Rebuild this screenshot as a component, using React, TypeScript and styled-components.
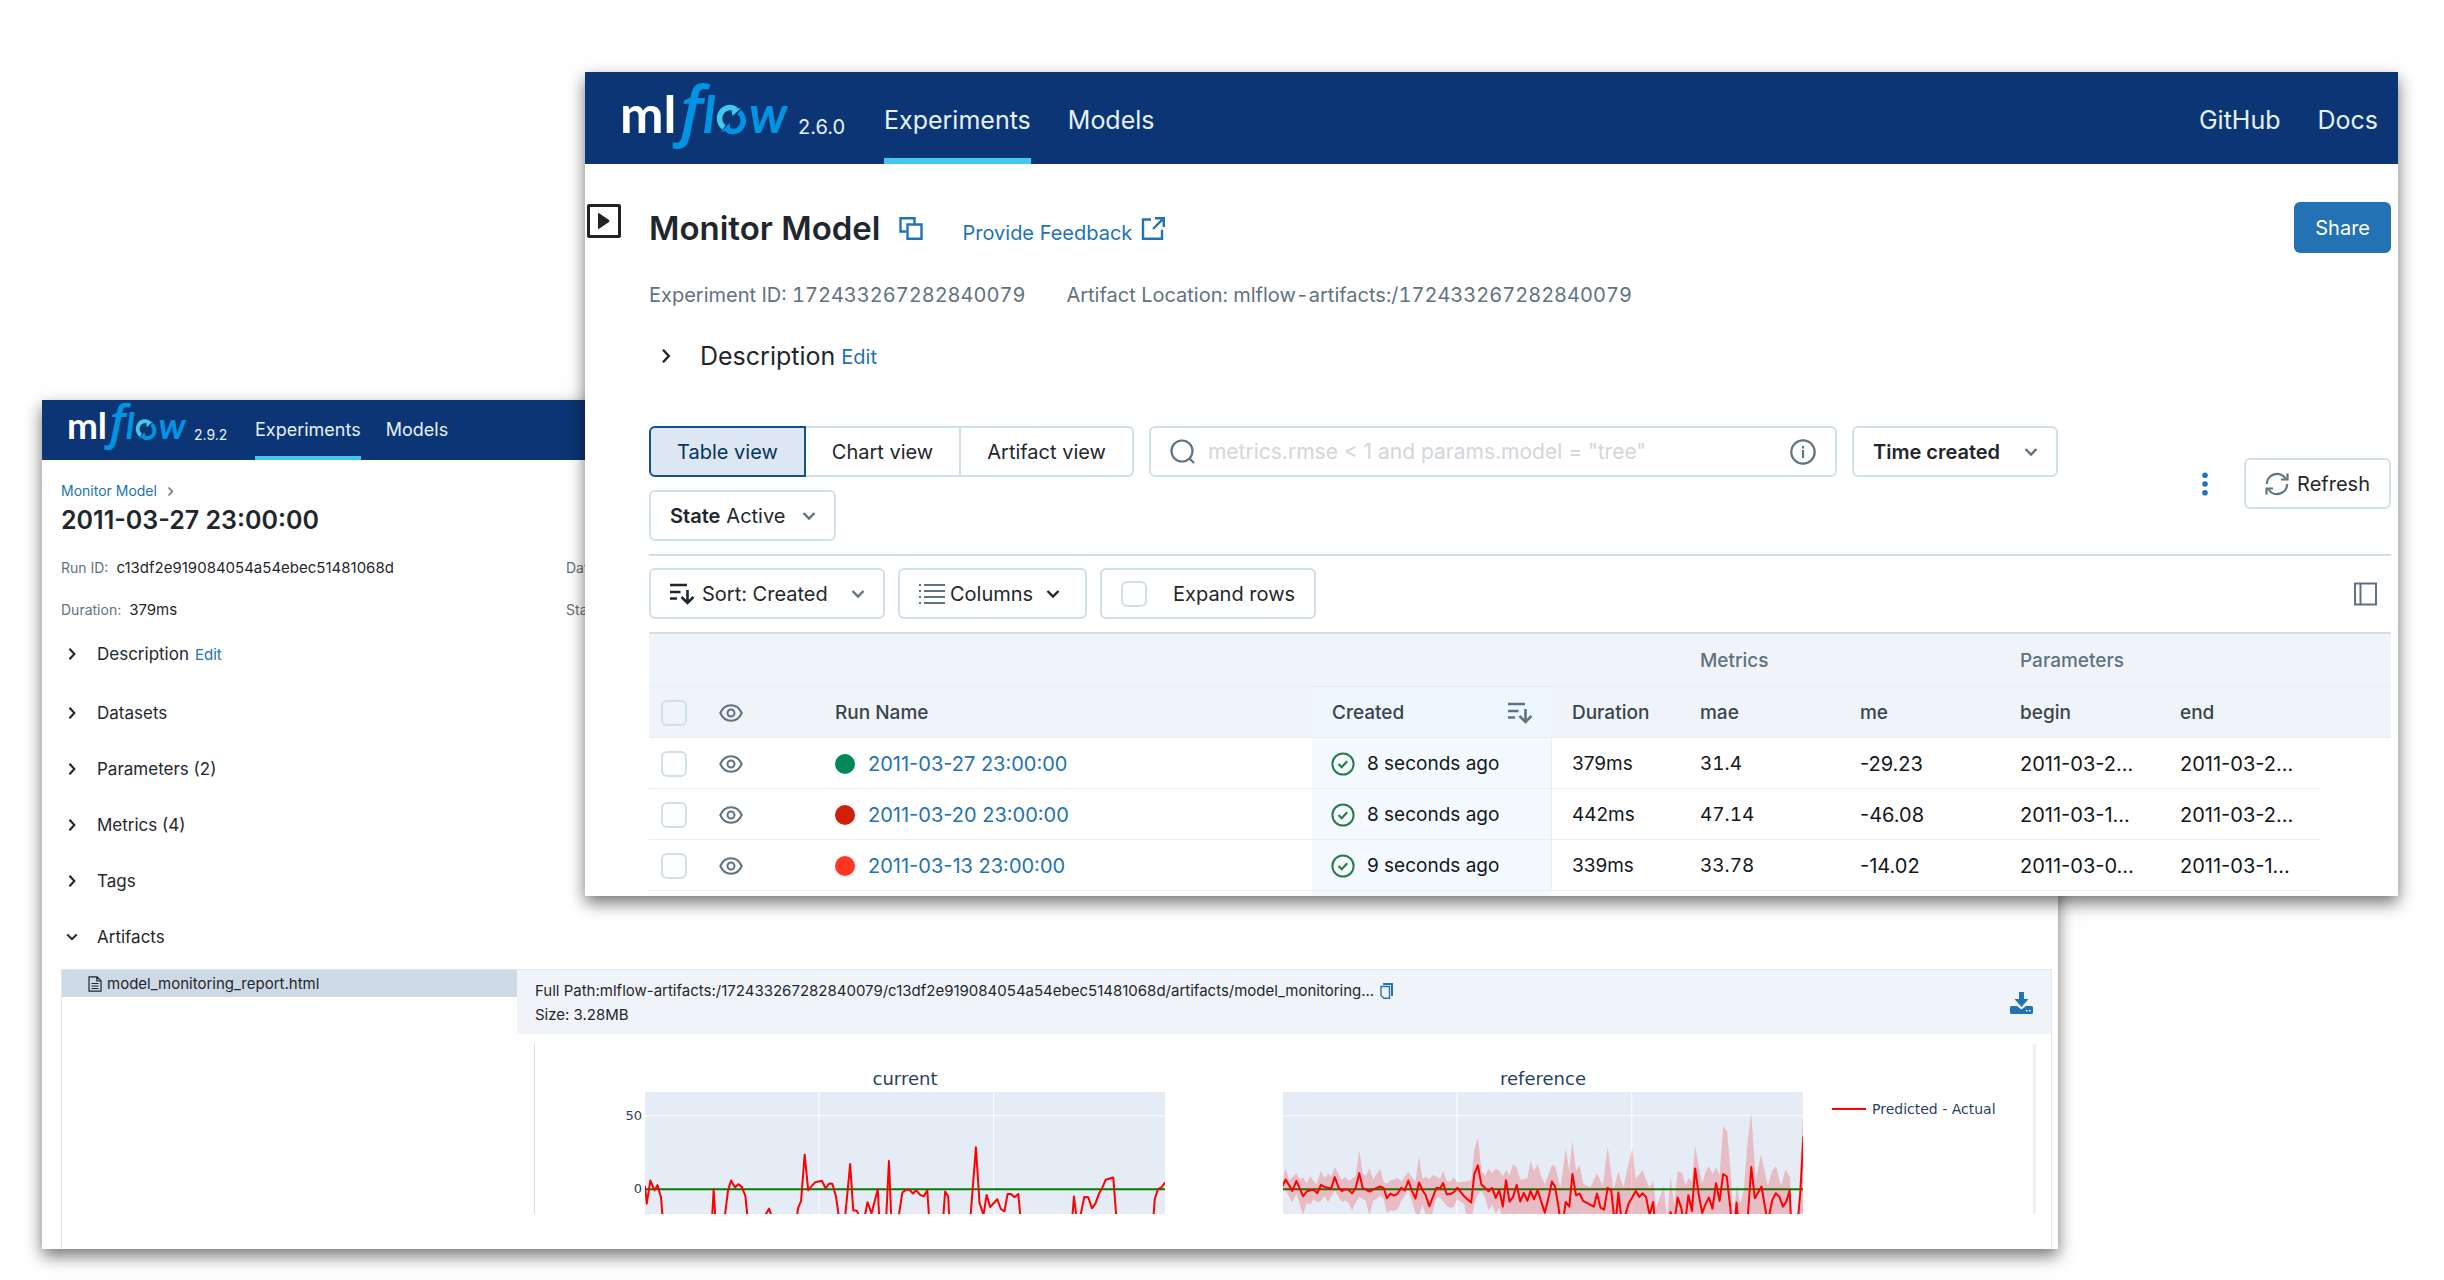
import React from "react";
import styled, { createGlobalStyle, css } from "styled-components";

const color = {
  navy: "#0b3574",
  navText: "#e7f1fb",
  accent: "#43c9ed",
  link: "#2272b4",
  text: "#1f272d",
  muted: "#5f7281",
  border: "#d1dfe9",
  line: "#e6eef4",
  head: "#f0f4f8",
};

const GlobalStyle = createGlobalStyle`
  *, *::before, *::after { box-sizing: border-box; }
  body { margin: 0; background: #fff; color: ${color.text}; font-family: Inter, "Liberation Sans", sans-serif; }
  button, input, select { font: inherit; color: inherit; margin: 0; }
  a { color: ${color.link}; text-decoration: none; }
  svg { display: block; flex: none; }
  h1, h2, p, dl, dd { margin: 0; }
`;

const Desktop = styled.main`
  position: relative;
  min-width: 2100px;
  min-height: 100vh;
  overflow: hidden;
`;

const windowFrame = css`
  position: absolute;
  background: #fff;
  box-shadow: 0 7px 16px rgba(0, 0, 0, 0.55);
`;

const ExperimentWindow = styled.section`
  ${windowFrame}
  top: 72px;
  left: 585px;
  right: 46px;
  font-size: 20px;
  line-height: 24px;
`;

const RunWindow = styled.section`
  ${windowFrame}
  top: 400px;
  left: 42px;
  right: 386px;
  font-size: 14px;
  line-height: 24px;
`;

/* Top navigation */

const TopBar = styled.header<{ $compact?: boolean }>`
  display: flex;
  height: ${(p) => (p.$compact ? 60 : 92)}px;
  padding: ${(p) => (p.$compact ? "0 20px 0 27px" : "0 20px 0 38px")};
  background: ${color.navy};
  color: ${color.navText};
  font-size: ${(p) => (p.$compact ? 18 : 25)}px;
`;

const Brand = styled.div<{ $compact?: boolean }>`
  display: flex;
  align-items: flex-end;
  align-self: flex-start;
  gap: ${(p) => (p.$compact ? 7 : 9)}px;
  width: ${(p) => (p.$compact ? 186 : 261)}px;
  padding-top: ${(p) => (p.$compact ? 3 : 10)}px;
`;

const Version = styled.span<{ $compact?: boolean }>`
  font-size: ${(p) => (p.$compact ? 14 : 20)}px;
  line-height: ${(p) => (p.$compact ? 14 : 20)}px;
  padding-bottom: ${(p) => (p.$compact ? 8 : 11)}px;
`;

const Nav = styled.nav<{ $compact?: boolean; $end?: boolean }>`
  display: flex;
  gap: ${(p) => (p.$compact ? 25 : 37)}px;
  margin-left: ${(p) => (p.$end ? "auto" : 0)};
`;

const NavLink = styled.a<{ $active?: boolean; $compact?: boolean }>`
  display: flex;
  align-items: center;
  color: inherit;
  padding-top: ${(p) => (p.$compact ? 4 : 10)}px;
  border-bottom: ${(p) => (p.$compact ? 4 : 6)}px solid ${(p) => (p.$active ? color.accent : "transparent")};
`;

const logoFont = 'Lato, "Open Sans", sans-serif';

const Logo = ({ width }: { width: number }) => (
  <svg width={width} height={(width * 66) / 166} viewBox="0 0 166 66" overflow="visible" role="img" aria-label="mlflow">
    <text x="-3" y="51" fontFamily={logoFont} fontWeight="700" fontSize="52" fill="#fff">ml</text>
    <text x="57" y="51" fontFamily='"Open Sans", sans-serif' fontStyle="italic" fontWeight="600" fontSize="66" fill="#0194e2">f</text>
    <text x="80" y="51" fontFamily={logoFont} fontStyle="italic" fontWeight="700" fontSize="52" fill="#0194e2">l</text>
    <g fill="none" strokeWidth="5.500">
      <path d="M101 45.500A10 10.500 0 0 1 113 27.500" stroke="#43c9ed" />
      <path d="M116 30A10 10.500 0 0 1 104 47.500" stroke="#0194e2" />
    </g>
    <path d="M118 26L109.500 34L108.500 27z" fill="#43c9ed" />
    <path d="M98 50L106.500 41L107.500 48z" fill="#0194e2" />
    <text x="126" y="51" fontFamily={logoFont} fontStyle="italic" fontWeight="700" fontSize="52" fill="#0194e2">w</text>
  </svg>
);

/* Icons */

type IconProps = { size?: number; width?: number };

const Chevron = ({ size = 14, dir = "down", width = 2.4 }: IconProps & { dir?: "down" | "right" }) => (
  <svg width={size} height={size} viewBox="0 0 14 14" fill="none" stroke="currentColor" strokeWidth={width}>
    <path d={dir === "down" ? "M1.500 4l5.500 5.500L12.500 4" : "M4 .8L9.800 7 4 13.200"} />
  </svg>
);

const CopyIcon = () => (
  <svg width="24" height="23" viewBox="0 0 24 23" fill="none" stroke="currentColor" strokeWidth="2.400">
    <path d="M7.500 14.500H1.500V1.200h14v5.500" />
    <path d="M8.500 7.500h14V21.800h-14z" />
  </svg>
);

const ExternalIcon = () => (
  <svg width="24" height="23" viewBox="0 0 24 23" fill="none" stroke="currentColor" strokeWidth="2.400">
    <path d="M10 2.500H2v19.300h19v-9M14 1.300h8.800v8.700M22.300 1.700L12 12" />
  </svg>
);

const SearchIcon = () => (
  <svg width="25" height="25" viewBox="0 0 25 25" fill="none" stroke={color.muted} strokeWidth="2.2">
    <circle cx="12" cy="12" r="10.500" />
    <path d="M19 19l5 5" />
  </svg>
);

const InfoIcon = () => (
  <svg width="26" height="26" viewBox="0 0 26 26" fill="none" stroke={color.muted} strokeWidth="2.200">
    <circle cx="13" cy="13" r="11.700" />
    <path d="M13 11v8M13 7v2.400" />
  </svg>
);

const SortIcon = () => (
  <svg width="24" height="22" viewBox="0 0 24 22" fill="none" stroke="currentColor" strokeWidth="2.600">
    <path d="M0 2h17M0 9h10.500M0 15.500h7M17.500 7v13M11.500 14l6 6 6-6" />
  </svg>
);

const ListIcon = () => (
  <svg width="26" height="22" viewBox="0 0 26 22" fill="none" stroke={color.muted} strokeWidth="2">
    <path d="M5 2h21M5 8h21M5 14h21M5 20h21M0 2h2M0 8h2M0 14h2M0 20h2" />
  </svg>
);

const RefreshIcon = () => (
  <svg width="24" height="24" viewBox="0 0 24 24" fill="none" stroke={color.muted} strokeWidth="2.200">
    <path d="M1.800 12A10.200 10.200 0 0 1 20.500 6.500M22.200 12A10.200 10.200 0 0 1 3.500 17.500" />
    <path d="M22.500 1.500v6h-6.500M1.500 22.500v-6H8" />
  </svg>
);

const KebabIcon = () => (
  <svg width="6" height="24" viewBox="0 0 6 24" fill={color.link}>
    <circle cx="3" cy="3.200" r="2.800" />
    <circle cx="3" cy="12" r="2.800" />
    <circle cx="3" cy="20.800" r="2.800" />
  </svg>
);

const SidePanelIcon = () => (
  <svg width="23" height="24" viewBox="0 0 23 24" fill="none" stroke={color.muted} strokeWidth="2">
    <path d="M1 1.500h21v21H1zM6.500 1.500v21" />
  </svg>
);

const EyeIcon = () => (
  <svg width="24" height="18" viewBox="0 0 24 18" fill="none" stroke={color.muted} strokeWidth="2">
    <path d="M1.300 9C3.500 4 7.300 1.200 12 1.200S20.500 4 22.700 9C20.500 14 16.700 16.800 12 16.800S3.500 14 1.300 9z" />
    <circle cx="12" cy="9" r="3.500" />
  </svg>
);

const CheckIcon = () => (
  <svg width="24" height="24" viewBox="0 0 24 24" fill="none" stroke="#277c43" strokeWidth="2">
    <circle cx="12" cy="12" r="10.600" />
    <path d="M7.500 12l3.200 3.200 5.500-6" strokeWidth="2.200" />
  </svg>
);

const FileIcon = () => (
  <svg width="14" height="16" viewBox="0 0 14 16" fill="none" stroke={color.text} strokeWidth="1.200">
    <path d="M1 .8h8l4 4v10.400H1zM8.800.8v4.200H13M3.500 7.500h7M3.500 10h7M3.500 12.500h7" />
  </svg>
);

const ClipboardIcon = () => (
  <svg width="13" height="16" viewBox="0 0 13 16" fill="none" stroke="currentColor" strokeWidth="1.400">
    <path d="M3 1h9v12" strokeWidth="2" />
    <path d="M1 3.500h8.500v11.700H4L1 12.500z" />
  </svg>
);

const DownloadIcon = () => (
  <svg width="23" height="22" viewBox="0 0 23 22" fill="currentColor">
    <path d="M9 0h5v7h4.500l-7 8-7-8H9z" />
    <path fillRule="evenodd" d="M1.500 14H7l4.500 3.500L16 14h5.500q1.500 0 1.500 1.500v5q0 1.500-1.500 1.500h-20Q0 22 0 20.500v-5Q0 14 1.500 14zM16 18v1.500h1.500V18zM19 18v1.500h1.500V18z" />
  </svg>
);

/* Experiment window */

const ExperimentBody = styled.div`
  display: flex;
`;

const Gutter = styled.div`
  flex: none;
  width: 64px;
  padding: 40px 2px;
`;

const ExpandPanel = styled.button`
  display: flex;
  align-items: center;
  justify-content: center;
  width: 34px;
  height: 34px;
  padding: 0;
  border: 3px solid #222;
  border-radius: 2px;
  background: none;
`;

const ExperimentMain = styled.div`
  flex: 1;
  min-width: 0;
  padding: 38px 7px 0 0;
`;

const TitleRow = styled.div`
  display: flex;
  align-items: center;
  justify-content: space-between;
`;

const TitleGroup = styled.div`
  display: flex;
  align-items: baseline;
`;

const Title = styled.h1`
  font-size: 33px;
  line-height: 44px;
  font-weight: 600;
`;

const IconButton = styled.button<{ $space?: number; $inset?: number; $push?: boolean }>`
  display: flex;
  padding: 0;
  margin: 0 ${(p) => p.$inset ?? 0}px 0 ${(p) => (p.$push ? "auto" : `${p.$space ?? 0}px`)};
  border: 0;
  background: none;
  color: ${color.link};
`;

const FeedbackLink = styled.a`
  display: flex;
  align-items: baseline;
  gap: 9px;
  margin-left: 39px;
`;

const control = css`
  display: flex;
  align-items: center;
  height: 51px;
  border: 2px solid ${color.border};
  border-radius: 6px;
  background: #fff;
  white-space: nowrap;
`;

const ShareButton = styled.button`
  ${control}
  padding: 0 19px;
  border-color: ${color.link};
  background: ${color.link};
  color: #fff;
`;

const MetaLine = styled.p`
  display: flex;
  gap: 41px;
  margin-top: 30px;
  color: ${color.muted};
  font-variant-numeric: tabular-nums;
`;

const DescriptionRow = styled.div`
  display: flex;
  align-items: center;
  height: 32px;
  margin-top: 33px;
  padding-left: 10px;
`;

const DescriptionTitle = styled.h2`
  margin-left: 27px;
  font-size: 25px;
  font-weight: 400;
`;

const EditLink = styled.a<{ $gap: number; $size: number }>`
  margin-left: ${(p) => p.$gap}px;
  padding-top: 2px;
  font-size: ${(p) => p.$size}px;
`;

const Toolbar = styled.div`
  display: flex;
  align-items: center;
  margin-top: 54px;
  padding-bottom: 13px;
  border-bottom: 2px solid ${color.border};
`;

const Filters = styled.div`
  display: flex;
  flex: 1;
  flex-wrap: wrap;
  gap: 13px 15px;
`;

const Segments = styled.div`
  ${control}
  border: 0;
`;

const Segment = styled.button<{ $active?: boolean }>`
  height: 51px;
  padding: 0 26px;
  border: 2px solid ${(p) => (p.$active ? "#0e538b" : color.border)};
  background: ${(p) => (p.$active ? "#dce7f3" : "#fff")};
  color: ${(p) => (p.$active ? "#04355d" : "inherit")};
  &:first-child { border-radius: 6px 0 0 6px; }
  &:last-child { border-radius: 0 6px 6px 0; }
  & + & { border-left: 0; }
`;

const SearchBox = styled.label`
  ${control}
  flex: 0 1 688px;
  gap: 13px;
  padding: 0 19px;
`;

const SearchInput = styled.input`
  flex: 1;
  min-width: 0;
  padding: 0;
  border: 0;
  outline: 0;
  background: none;
  font-size: 21px;
  &::placeholder { color: #d3d6d9; opacity: 1; }
`;

const SelectBox = styled.label<{ $strong?: boolean; $lead?: number; $gap?: number; $end?: number; $tone?: string }>`
  ${control}
  padding: 0 ${(p) => p.$end ?? 18}px 0 19px;
  > svg { margin-left: ${(p) => p.$gap ?? 18}px; pointer-events: none; }
  > svg:last-child { color: ${(p) => p.$tone ?? color.muted}; }
  > svg:first-child { margin-left: 0; margin-right: ${(p) => p.$lead ?? 8}px; }
  select {
    appearance: none;
    padding: 0;
    border: 0;
    outline: 0;
    background: none;
    font-weight: ${(p) => (p.$strong ? 600 : 400)};
  }
`;

const Strong = styled.span`
  margin-right: 6px;
  font-weight: 600;
`;

const RefreshButton = styled.button`
  ${control}
  gap: 8px;
  padding: 0 19px;
`;

const TableTools = styled.div`
  display: flex;
  align-items: center;
  gap: 13px;
  margin: 12px 0 13px;
`;

const ToggleBox = styled.label`
  ${control}
  gap: 26px;
  padding: 0 19px;
`;

const Check = styled.input.attrs({ type: "checkbox" })`
  display: block;
  appearance: none;
  width: 26px;
  height: 26px;
  border: 2px solid ${color.border};
  border-radius: 6px;
`;

const RunsTable = styled.table`
  width: 100%;
  table-layout: fixed;
  border-collapse: separate;
  border-spacing: 0;
  text-align: left;
  font-size: 19px;
`;

const Col = styled.col<{ $w?: number }>`
  width: ${(p) => (p.$w ? `${p.$w}px` : "auto")};
`;

const GroupCell = styled.th`
  height: 55px;
  padding: 1px 20px 0;
  border-top: 2px solid ${color.border};
  border-bottom: 1px solid ${color.line};
  background: ${color.head};
  color: ${color.muted};
  font-weight: 500;
`;

const HeadCell = styled.th<{ $tight?: boolean; $sorted?: boolean }>`
  height: 51px;
  padding: 1px ${(p) => (p.$tight ? 12 : 20)}px 0;
  border-bottom: 1px solid ${color.line};
  background: ${(p) => (p.$sorted ? "#eef6fe" : color.head)};
  color: #37444f;
  font-weight: 500;
`;

const SortedHead = styled.div`
  display: flex;
  align-items: center;
  justify-content: space-between;
  > svg { color: ${color.muted}; }
`;

const Cell = styled.td<{ $tight?: boolean; $sorted?: boolean; $value?: boolean; $tabular?: boolean }>`
  height: 51px;
  padding: 1px ${(p) => (p.$tight ? 12 : 20)}px 0;
  border-bottom: 1px solid ${color.line};
  color: #11171c;
  white-space: nowrap;
  font-size: ${(p) => (p.$value ? 20 : 19)}px;
  font-variant-numeric: ${(p) => (p.$tabular ? "tabular-nums" : "normal")};
  ${(p) => p.$sorted && css`
    padding-left: 19px;
    background: #f4f9ff;
    border-right: 1px solid ${color.line};
  `}
`;

const TailCell = styled.td<{ $sorted?: boolean }>`
  height: 5px;
  padding: 0;
  background: ${(p) => (p.$sorted ? "#f4f9ff" : "none")};
`;

const Inline = styled.div<{ $gap: number }>`
  display: flex;
  align-items: center;
  gap: ${(p) => p.$gap}px;
`;

const Dot = styled.span<{ $color: string }>`
  width: 20px;
  height: 20px;
  border-radius: 50%;
  background: ${(p) => p.$color};
`;

const runs = [
  { name: "2011-03-27 23:00:00", dot: "#00875c", created: "8 seconds ago", duration: "379ms", mae: "31.4", me: "-29.23", begin: "2011-03-2...", end: "2011-03-2..." },
  { name: "2011-03-20 23:00:00", dot: "#d01f0b", created: "8 seconds ago", duration: "442ms", mae: "47.14", me: "-46.08", begin: "2011-03-1...", end: "2011-03-2..." },
  { name: "2011-03-13 23:00:00", dot: "#ff3621", created: "9 seconds ago", duration: "339ms", mae: "33.78", me: "-14.02", begin: "2011-03-0...", end: "2011-03-1..." },
];

const Experiment = () => (
  <ExperimentWindow>
    <TopBar>
      <Brand>
        <Logo width={166} />
        <Version>2.6.0</Version>
      </Brand>
      <Nav>
        <NavLink href="#experiments" $active>Experiments</NavLink>
        <NavLink href="#models">Models</NavLink>
      </Nav>
      <Nav $end>
        <NavLink href="#github">GitHub</NavLink>
        <NavLink href="#docs">Docs</NavLink>
      </Nav>
    </TopBar>
    <ExperimentBody>
      <Gutter>
        <ExpandPanel aria-label="Show experiment list">
          <svg width="12" height="16" viewBox="0 0 12 16"><path d="M0 0v16l1.500-.5L11 9q1-1 0-2L1.500.5z" fill="#222" /></svg>
        </ExpandPanel>
      </Gutter>
      <ExperimentMain>
        <TitleRow>
          <TitleGroup>
            <Title>Monitor Model</Title>
            <IconButton $space={19} aria-label="Copy experiment name"><CopyIcon /></IconButton>
            <FeedbackLink href="#feedback">Provide Feedback <ExternalIcon /></FeedbackLink>
          </TitleGroup>
          <ShareButton>Share</ShareButton>
        </TitleRow>
        <MetaLine>
          <span>Experiment ID: 172433267282840079</span>
          <span>Artifact Location: mlflow-artifacts:/172433267282840079</span>
        </MetaLine>
        <DescriptionRow>
          <Chevron dir="right" />
          <DescriptionTitle>Description</DescriptionTitle>
          <EditLink $gap={6} $size={20} href="#edit">Edit</EditLink>
        </DescriptionRow>
        <Toolbar>
          <Filters>
            <Segments>
              <Segment $active>Table view</Segment>
              <Segment>Chart view</Segment>
              <Segment>Artifact view</Segment>
            </Segments>
            <SearchBox>
              <SearchIcon />
              <SearchInput aria-label="Search runs" placeholder={'metrics.rmse < 1 and params.model = "tree"'} />
              <InfoIcon />
            </SearchBox>
            <SelectBox $strong $gap={23}>
              <select aria-label="Time created"><option>Time created</option></select>
              <Chevron />
            </SelectBox>
            <SelectBox $gap={16}>
              <Strong>State</Strong>
              <select><option>Active</option></select>
              <Chevron />
            </SelectBox>
          </Filters>
          <IconButton $inset={36} aria-label="More options"><KebabIcon /></IconButton>
          <RefreshButton><RefreshIcon />Refresh</RefreshButton>
        </Toolbar>
        <TableTools>
          <SelectBox $gap={23}>
            <SortIcon />
            <select aria-label="Sort"><option>Sort: Created</option></select>
            <Chevron />
          </SelectBox>
          <SelectBox $lead={5} $gap={12} $end={25} $tone={color.text}>
            <ListIcon />
            <select aria-label="Columns"><option>Columns</option></select>
            <Chevron />
          </SelectBox>
          <ToggleBox><Check />Expand rows</ToggleBox>
          <IconButton aria-label="Toggle side panel" $inset={14} $push><SidePanelIcon /></IconButton>
        </TableTools>
        <RunsTable>
          <colgroup>
            <Col $w={58} /><Col $w={108} /><Col /><Col $w={240} /><Col $w={128} />
            <Col $w={160} /><Col $w={160} /><Col $w={160} /><Col $w={160} /><Col $w={71} />
          </colgroup>
          <thead>
            <tr>
              <GroupCell colSpan={5} />
              <GroupCell colSpan={2}>Metrics</GroupCell>
              <GroupCell colSpan={3}>Parameters</GroupCell>
            </tr>
            <tr>
              <HeadCell $tight><Check aria-label="Select all runs" /></HeadCell>
              <HeadCell $tight><EyeIcon /></HeadCell>
              <HeadCell>Run Name</HeadCell>
              <HeadCell $sorted><SortedHead>Created<SortIcon /></SortedHead></HeadCell>
              <HeadCell>Duration</HeadCell>
              <HeadCell>mae</HeadCell>
              <HeadCell>me</HeadCell>
              <HeadCell>begin</HeadCell>
              <HeadCell>end</HeadCell>
              <HeadCell $tight />
            </tr>
          </thead>
          <tbody>
            {runs.map((run) => (
              <tr key={run.name}>
                <Cell $tight><Check aria-label={`Select ${run.name}`} /></Cell>
                <Cell $tight><EyeIcon /></Cell>
                <Cell $value><Inline $gap={13}><Dot $color={run.dot} /><a href="#run">{run.name}</a></Inline></Cell>
                <Cell $sorted><Inline $gap={12}><CheckIcon />{run.created}</Inline></Cell>
                <Cell>{run.duration}</Cell>
                <Cell $tabular>{run.mae}</Cell>
                <Cell $value>{run.me}</Cell>
                <Cell $value>{run.begin}</Cell>
                <Cell $value>{run.end}</Cell>
              </tr>
            ))}
            <tr aria-hidden="true">
              <TailCell colSpan={3} />
              <TailCell $sorted />
            </tr>
          </tbody>
        </RunsTable>
      </ExperimentMain>
    </ExperimentBody>
  </ExperimentWindow>
);

/* Run window */

const RunBody = styled.div`
  padding: 20px 6px 0 19px;
`;

const Breadcrumb = styled.nav`
  display: flex;
  align-items: center;
  gap: 9px;
  height: 22px;
  color: ${color.muted};
`;

const RunTitle = styled.h1`
  font-size: 25px;
  line-height: 36px;
  font-weight: 600;
`;

const Facts = styled.dl`
  display: grid;
  grid-template-columns: 505px 1fr;
  grid-auto-rows: 42px;
  align-items: center;
  margin-top: 9px;
`;

const Fact = styled.div`
  display: flex;
  gap: 8px;
  dt { color: ${color.muted}; }
  dd { font-size: 15px; }
`;

const Section = styled.div<{ $first?: boolean }>`
  display: flex;
  align-items: center;
  height: ${(p) => (p.$first ? 46 : 56)}px;
  margin-bottom: ${(p) => (p.$first ? 8 : 0)}px;
  padding-left: 5px;
`;

const SectionTitle = styled.h2`
  margin-left: 19px;
  font-size: 17px;
  font-weight: 400;
`;

const ArtifactPanel = styled.div`
  display: grid;
  grid-template-columns: 455px 1fr;
  margin-top: 4px;
  border: 1px solid #dfe9f1;
  border-bottom: 0;
  font-size: 15px;
`;

const SelectedFile = styled.button`
  display: flex;
  align-items: center;
  gap: 5px;
  width: 100%;
  height: 27px;
  padding: 0 26px;
  border: 0;
  background: #cdd9e5;
`;

const ArtifactHead = styled.div`
  display: flex;
  align-items: center;
  justify-content: space-between;
  height: 64px;
  padding: 2px 18px 0;
  background: ${color.head};
`;

const PathLine = styled.p`
  display: flex;
  align-items: center;
  gap: 6px;
`;

const Preview = styled.div`
  display: flex;
  height: 170px;
  margin: 10px 15px 35px 17px;
  border-left: 1px solid #dcdcdc;
  border-right: 3px solid #f0f0f0;
  color: #2a3f5f;
  font-family: "DejaVu Sans", sans-serif;
`;

const Axis = styled.div`
  display: flex;
  flex-direction: column;
  align-items: flex-end;
  gap: 53px;
  width: 110px;
  padding: 62px 3px 0 0;
  font-size: 13px;
  line-height: 20px;
`;

const Plots = styled.div`
  display: flex;
  flex: 1;
  gap: 118px;
`;

const Plot = styled.figure`
  display: flex;
  flex: 1;
  flex-direction: column;
  min-width: 0;
  margin: 0;
  > svg { flex: 1; width: 100%; min-height: 0; }
`;

const PlotTitle = styled.figcaption`
  padding: 23px 0 1px;
  font-size: 18px;
  text-align: center;
`;

const Legend = styled.div`
  display: flex;
  align-items: center;
  gap: 6px;
  width: 230px;
  height: 20px;
  margin-top: 55px;
  padding-left: 29px;
  font-size: 14px;
  white-space: nowrap;
`;

const LegendMark = styled.span`
  width: 34px;
  height: 2px;
  background: #f00;
`;

/* Every series is a list of strokes; gaps between them lie below the visible range. */
const currentSeries = [
  "0,280 4,333 12,264 21,293 28,278 36,315 40,385",
  "150,385 154,290 158,385",
  "179,370 186,295 193,264 202,285 209,275 217,283 225,310 230,375",
  "270,367 278,348 284,370",
  "341,370 343,347 350,325 358,187 366,293 374,280 382,269 397,265 405,288 413,273 420,274 428,310 435,375",
  "449,370 460,215 467,353 475,354 480,370",
  "493,370 499,329 508,362 522,290 525,370",
  "541,370 547,206 552,370",
  "569,370 577,300 585,292 593,292 601,303 608,293 617,307 625,311 633,293 637,375",
  "669,370 673,297 680,312 682,375",
  "730,370 742,165 750,330 759,367 766,307 774,343 790,320 798,349 806,356 813,304 820,304 829,314 837,304 842,375",
  "958,375 962,312 967,370",
  "977,365 985,313 994,314 1002,347 1010,333 1018,303 1025,287 1033,262 1050,255 1057,375",
  "1140,375 1143,320 1150,290 1158,285 1166,270",
];

const referenceSeries = [
  "-2,283 6,261 21,295 30,265 45,311 53,297 61,293 69,292 77,302 85,277 93,283 108,288 116,254 124,283 132,296 139,290 147,292 155,302 163,287 171,242 179,287 194,297 202,291 210,286 218,282 226,287 233,317 241,303 249,309 257,303 265,286 273,294 281,264 289,294 297,318 305,270 313,294 320,308 328,341 336,314 344,286 352,288 359,272 367,305 375,305 383,299 391,286 406,311 422,330 429,245 437,219 445,277 453,286 461,296 469,286 477,316 485,293 493,342 500,263 508,327 516,313 524,277 532,327 540,301 548,325 555,295 563,320 571,293 579,327 587,360 595,318 603,267 610,283 618,345 621,380",
  "629,375 634,328 642,342 649,245 657,308 665,303 673,325 697,342 704,303 712,345 720,351 728,286 736,295 743,380",
  "747,375 752,300 759,380",
  "767,370 775,333 783,315 791,295 799,313 806,302 814,313 822,367 830,328 833,375",
  "867,375 869,358 873,375",
  "879,375 885,315 893,345 897,375",
  "903,375 909,308 917,355 924,228 932,305 940,361 948,333 955,315 963,348 971,272 979,325 987,245 995,252 1003,345 1005,375",
  "1014,375 1017,330 1020,375",
  "1042,375 1050,224 1058,317 1073,282 1081,345 1085,375",
  "1090,370 1097,323 1105,302 1113,313 1121,342 1129,325 1136,293 1139,375",
  "1155,375 1160,300 1167,133",
];

const referenceBand =
  "-2,275 6,227 14,265 30,242 38,260 45,254 53,273 61,251 75,276 85,235 93,257 101,244 108,252 116,223 132,263 139,252 147,265 163,251 171,173 179,245 186,250 194,227 202,260 218,230 226,269 233,274 241,263 249,261 257,256 265,267 281,239 297,268 305,192 313,260 320,252 328,261 336,248 352,258 359,235 367,265 375,267 383,254 391,270 406,267 422,263 429,172 437,134 445,235 453,250 461,228 469,242 477,228 485,235 493,253 500,232 508,250 516,215 524,225 532,261 548,257 555,206 563,235 571,215 579,250 587,275 603,218 610,221 622,285 634,170 642,235 649,146 657,235 665,217 673,273 689,285 704,242 717,280 728,162 741,290 752,237 763,285 783,167 791,260 806,233 822,287 830,265 837,345 854,280 861,380 869,255 877,335 885,236 895,242 903,280 909,257 917,267 924,162 940,273 948,235 955,221 963,245 971,225 979,250 987,102 996,118 1006,275 1009,375 1018,280 1025,335 1033,295 1042,145 1050,62 1060,262 1072,186 1087,280 1097,235 1105,221 1117,280 1127,231 1137,255 1139,375 1155,375 1161,185 1167,55 1167,390 493,380 485,345 477,363 469,337 461,353 453,315 445,295 437,305 429,335 422,385 414,385 406,335 391,320 383,342 375,345 367,340 352,315 344,315 334,367 320,367 313,335 305,370 297,360 281,293 265,325 257,350 249,355 241,353 233,360 226,320 218,310 202,325 194,370 186,325 171,313 163,330 155,353 147,331 139,323 132,328 116,295 101,328 93,310 85,325 77,330 69,320 61,335 53,332 45,367 30,302 21,330 6,293 -2,293";

const Chart = ({ series, band }: { series: string[]; band?: string }) => (
  <svg viewBox="0 0 1166 364" preserveAspectRatio="none">
    <rect width="1166" height="364" fill="#e5ecf6" />
    <g fill="none" strokeWidth="2">
      <path d="M390 0V364M782 0V364M0 71H1166" stroke="#fff" strokeWidth="1" vectorEffect="non-scaling-stroke" />
      <path d="M0 290H1166" stroke="#008000" vectorEffect="non-scaling-stroke" />
      {band && <polygon points={band} fill="#f40000" fillOpacity="0.2" />}
      {series.map((points) => (
        <polyline key={points} points={points} stroke="#f00" strokeLinejoin="round" vectorEffect="non-scaling-stroke" />
      ))}
    </g>
  </svg>
);

const Run = () => (
  <RunWindow>
    <TopBar $compact>
      <Brand $compact>
        <Logo width={118} />
        <Version $compact>2.9.2</Version>
      </Brand>
      <Nav $compact>
        <NavLink href="#experiments" $active $compact>Experiments</NavLink>
        <NavLink href="#models" $compact>Models</NavLink>
      </Nav>
    </TopBar>
    <RunBody>
      <Breadcrumb>
        <a href="#monitor-model">Monitor Model</a>
        <Chevron dir="right" size={9} />
      </Breadcrumb>
      <RunTitle>2011-03-27 23:00:00</RunTitle>
      <Facts>
        <Fact><dt>Run ID:</dt><dd>c13df2e919084054a54ebec51481068d</dd></Fact>
        <Fact><dt>Date:</dt></Fact>
        <Fact><dt>Duration:</dt><dd>379ms</dd></Fact>
        <Fact><dt>Status:</dt></Fact>
      </Facts>
      <Section $first>
        <Chevron dir="right" size={12} />
        <SectionTitle>Description</SectionTitle>
        <EditLink $gap={6} $size={15} href="#edit">Edit</EditLink>
      </Section>
      {["Datasets", "Parameters (2)", "Metrics (4)", "Tags"].map((name) => (
        <Section key={name}>
          <Chevron dir="right" size={12} />
          <SectionTitle>{name}</SectionTitle>
        </Section>
      ))}
      <Section>
        <Chevron size={12} />
        <SectionTitle>Artifacts</SectionTitle>
      </Section>
      <ArtifactPanel>
        <div>
          <SelectedFile><FileIcon />model_monitoring_report.html</SelectedFile>
        </div>
        <div>
          <ArtifactHead>
            <div>
              <PathLine>
                Full Path:mlflow-artifacts:/172433267282840079/c13df2e919084054a54ebec51481068d/artifacts/model_monitoring...
                <IconButton aria-label="Copy path"><ClipboardIcon /></IconButton>
              </PathLine>
              <p>Size: 3.28MB</p>
            </div>
            <IconButton aria-label="Download artifact"><DownloadIcon /></IconButton>
          </ArtifactHead>
          <Preview>
            <Axis><span>50</span><span>0</span></Axis>
            <Plots>
              <Plot><PlotTitle>current</PlotTitle><Chart series={currentSeries} /></Plot>
              <Plot><PlotTitle>reference</PlotTitle><Chart series={referenceSeries} band={referenceBand} /></Plot>
            </Plots>
            <Legend><LegendMark />Predicted - Actual</Legend>
          </Preview>
        </div>
      </ArtifactPanel>
    </RunBody>
  </RunWindow>
);

export default function App() {
  return (
    <Desktop>
      <GlobalStyle />
      <Run />
      <Experiment />
    </Desktop>
  );
}
